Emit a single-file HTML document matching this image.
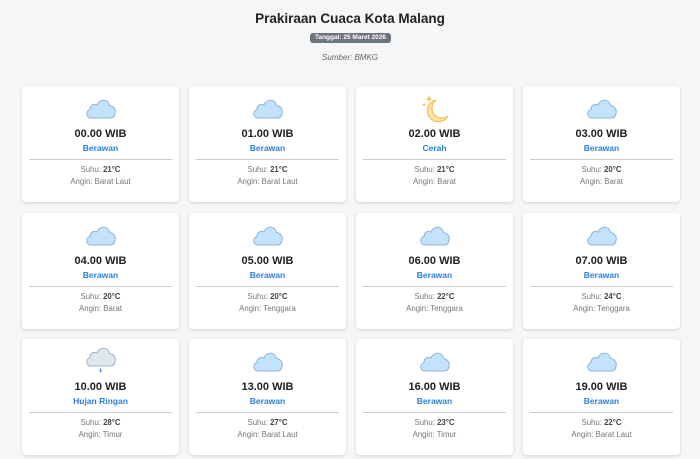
<!DOCTYPE html>
<html><head><meta charset="utf-8"><style>
*{margin:0;padding:0;box-sizing:border-box}
body{width:700px;height:459px;background:#f5f6f8;font-family:"Liberation Sans",sans-serif;overflow:hidden;position:relative;color:#222}
h1{position:absolute;top:11px;left:0;width:700px;text-align:center;font-size:13.5px;font-weight:bold;color:#222}
.badge{position:absolute;top:33px;left:310px;width:81px;height:10px;background:#6c757d;border-radius:3px;color:#fff;font-size:6.5px;font-weight:bold;text-align:center;line-height:10px}
.src{position:absolute;top:53px;left:0;width:700px;text-align:center;font-size:8px;font-style:italic;color:#666}
.card{position:absolute;width:157px;height:116px;background:#fff;border-radius:4px;box-shadow:0 1px 3px rgba(0,0,0,.15);text-align:center}
.card svg{position:absolute}
.t{position:absolute;top:42px;width:100%;font-size:11px;font-weight:bold;color:#222}
.s{position:absolute;top:57px;width:100%;font-size:8.5px;font-weight:bold;color:#2a7de1}
.hr{position:absolute;top:73px;left:7px;right:7px;border-top:1px solid #ccc}
.a{position:absolute;top:78px;width:100%;font-size:7.8px;color:#777;line-height:12px}
.a b{color:#444}
</style></head><body>
<h1>Prakiraan Cuaca Kota Malang</h1>
<div class="badge">Tanggal: 25 Maret 2026</div>
<div class="src">Sumber: BMKG</div>
<div id="g"></div>
<script>
const cp="M7 21 C2 21 1 14 6 12.5 C6 8 10 6.5 13 8 C15 2 24 1 25.5 8.5 C30 9 32 13 31 16.5 C30.5 20 28 21 26 21 Z";
const cloud=`<svg style="left:62px;top:11px" width="33" height="23" viewBox="0 0 33 23"><path d="${cp}" fill="#c3e2fb" stroke="#8eb3db" stroke-width="1"/></svg>`;
const rain=`<svg style="left:62px;top:6px" width="33" height="30" viewBox="0 0 33 30"><path d="${cp}" fill="#dfe7ef" stroke="#9fb3c6" stroke-width="1"/><path d="M16.5 23 C15.5 25 15 26.5 16.5 27.5 C18 26.5 17.5 25 16.5 23Z" fill="#4a8ad0"/></svg>`;
const moon='<svg style="left:64px;top:8px" width="30" height="30" viewBox="0 0 30 30"><path d="M16 6 A11 11 0 1 0 28 22 A9 9 0 1 1 16 6Z" fill="#ffe2a0" stroke="#f0b84a" stroke-width="1"/><path d="M9 1 L10 4 L13 5 L10 6 L9 9 L8 6 L5 5 L8 4Z" fill="#f6c352"/><path d="M4 8 L4.6 10 L6.5 10.5 L4.6 11 L4 13 L3.4 11 L1.5 10.5 L3.4 10Z" fill="#f6c352"/></svg>';
const d=[["00.00","Berawan","21","Barat Laut"],["01.00","Berawan","21","Barat Laut"],["02.00","Cerah","21","Barat"],["03.00","Berawan","20","Barat"],["04.00","Berawan","20","Barat"],["05.00","Berawan","20","Tenggara"],["06.00","Berawan","22","Tenggara"],["07.00","Berawan","24","Tenggara"],["10.00","Hujan Ringan","28","Timur"],["13.00","Berawan","27","Barat Laut"],["16.00","Berawan","23","Timur"],["19.00","Berawan","22","Barat Laut"]];
let h='';d.forEach((c,i)=>{const x=22+(i%4)*167,y=86+Math.floor(i/4)*126.5;
const ic=c[1]=="Cerah"?moon:c[1]=="Hujan Ringan"?rain:cloud;
h+=`<div class="card" style="left:${x}px;top:${y}px">${ic}<div class="t">${c[0]} WIB</div><div class="s">${c[1]}</div><div class="hr"></div><div class="a">Suhu: <b>${c[2]}°C</b><br>Angin: ${c[3]}</div></div>`});
document.getElementById('g').innerHTML=h;
</script>
</body></html>
